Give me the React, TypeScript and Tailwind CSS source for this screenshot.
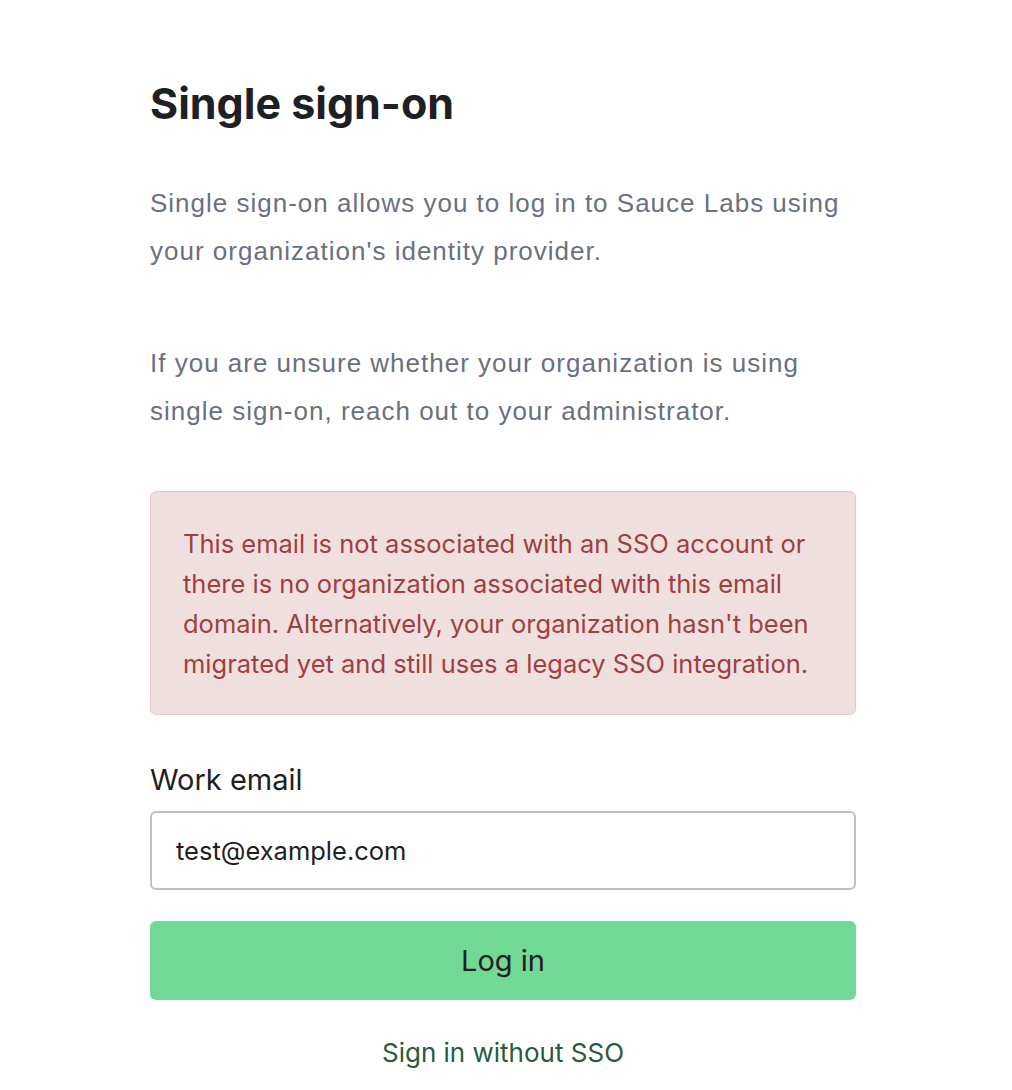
import React, { useState } from 'react';

const App: React.FC = () => {
  const [email, setEmail] = useState('test@example.com');

  return (
    <div className="min-h-screen bg-white font-['Inter',sans-serif]">
      <div className="w-[706px] ml-[150px] pt-[79px] pb-8">
        <h1 className="text-[43px] leading-[48px] font-bold text-[#1f2023]">Single sign-on</h1>

        <div className="font-['Liberation_Sans',Arial,sans-serif] text-[26px] leading-[48px] tracking-[1px] text-[#6b7080]">
          <p className="mt-[52px]">
            Single sign-on allows you to log in to Sauce Labs using your organization's identity provider.
          </p>
          <p className="mt-[64px] pr-[40px]">
            If you are unsure whether your organization is using single sign-on, reach out to your administrator.
          </p>
        </div>

        <div className="mt-[56px] rounded-md border border-[#e6c8ca] bg-[#f0dfdf] px-8 pt-8 pb-[30px]">
          <p className="text-[25.5px] leading-[40px] text-[#a03f3f]">
            This email is not associated with an SSO account or there is no organization associated with this email domain. Alternatively, your organization hasn't been migrated yet and still uses a legacy SSO integration.
          </p>
        </div>

        <label className="block mt-[49px] text-[29px] leading-[32px] text-[#1f2023]">Work email</label>
        <input
          value={email}
          onChange={(e) => setEmail(e.target.value)}
          className="mt-[15px] block w-full h-[79px] rounded-md border-2 border-[#bcbfcc] bg-white px-6 text-[25.5px] text-[#1f2023] outline-none"
        />

        <button className="mt-[31px] block w-full h-[79px] rounded-md bg-[#72d896] text-[29px] text-[#1f2023]">
          Log in
        </button>

        <div className="mt-[37px] text-center">
          <a href="#" className="text-[26px] leading-[32px] text-[#2b5b3b]">Sign in without SSO</a>
        </div>
      </div>
    </div>
  );
};

export default App;
